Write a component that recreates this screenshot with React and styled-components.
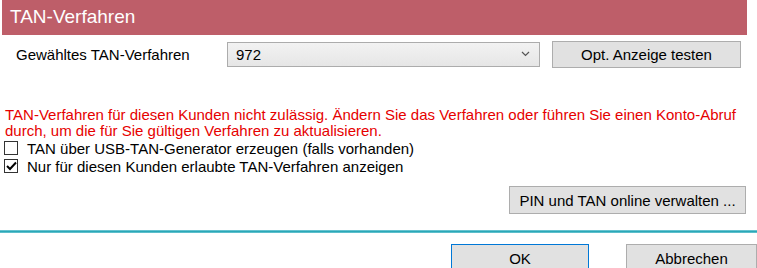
import React from "react";
import styled, { createGlobalStyle } from "styled-components";

const Global = createGlobalStyle`
  html, body { margin: 0; padding: 0; background: #ffffff; }
  body { font-family: "Liberation Sans", Arial, sans-serif; font-size: 15px; color: #000; }
  * { box-sizing: border-box; }
`;

const Page = styled.div`
  width: 757px;
  height: 268px;
  overflow: hidden;
  display: flex;
  flex-direction: column;
  & > * { flex-shrink: 0; }
`;

const Header = styled.div`
  margin-left: 2px;
  width: 745px;
  height: 35px;
  background: #be5e69;
  color: #fff;
  font-size: 19px;
  display: flex;
  align-items: center;
  padding-left: 8px;
  padding-bottom: 2px;
`;

const Row = styled.div`
  display: flex;
  align-items: center;
  margin-top: 6px;
  height: 26px;
`;

const Label = styled.div`
  width: 227px;
  padding-left: 16px;
`;

const Select = styled.div`
  width: 313px;
  height: 25px;
  border: 1px solid #acacac;
  background: linear-gradient(#f2f2f2, #e6e6e6);
  display: flex;
  align-items: center;
  justify-content: space-between;
  padding: 0 9px 0 8px;
`;

const Button = styled.div`
  width: ${(p) => p.$w}px;
  height: ${(p) => p.$h || 27}px;
  margin-left: ${(p) => p.$ml || 0}px;
  border: 1px solid ${(p) => (p.$focus ? "#0078d7" : "#adadad")};
  background: #e1e1e1;
  display: flex;
  align-items: center;
  justify-content: center;
  flex-shrink: 0;
`;

const Warning = styled.div`
  margin-top: 40px;
  padding-left: 5px;
  color: #e60000;
  line-height: 16px;
  white-space: nowrap;
`;

const CheckRow = styled.div`
  display: flex;
  align-items: center;
  height: 18px;
  padding-left: 4px;
`;

const Box = styled.div`
  width: 14px;
  height: 14px;
  border: 1px solid #333;
  background: #fff;
  margin-right: 9px;
  display: flex;
  align-items: center;
  justify-content: center;
`;

const RightRow = styled.div`
  display: flex;
  justify-content: flex-end;
  padding-right: 11px;
  margin-top: 11px;
`;

const Divider = styled.div`
  margin-top: 16px;
  height: 3px;
  background: linear-gradient(#8fd6e0, #2aa8b8 40%, #2aa8b8 70%, #9ad9e2);
`;

const Footer = styled.div`
  display: flex;
  margin-top: 11px;
  padding-left: 451px;
`;

export default function App() {
  return (
    <>
      <Global />
      <Page>
        <Header>TAN-Verfahren</Header>
        <Row>
          <Label>Gewähltes TAN-Verfahren</Label>
          <Select>
            <span>972</span>
            <svg width="9" height="6" viewBox="0 0 9 6">
              <path d="M1 1 L4.5 4.5 L8 1" fill="none" stroke="#555" strokeWidth="1.2" />
            </svg>
          </Select>
          <Button $w={189} $ml={12}>Opt. Anzeige testen</Button>
        </Row>
        <Warning>
          TAN-Verfahren für diesen Kunden nicht zulässig. Ändern Sie das Verfahren oder führen Sie einen Konto-Abruf
          <br />
          durch, um die für Sie gültigen Verfahren zu aktualisieren.
        </Warning>
        <CheckRow>
          <Box />
          TAN über USB-TAN-Generator erzeugen (falls vorhanden)
        </CheckRow>
        <CheckRow>
          <Box>
            <svg width="11" height="10" viewBox="0 0 11 10">
              <path d="M1 5 L4 8 L10 1.5" fill="none" stroke="#000" strokeWidth="2" />
            </svg>
          </Box>
          Nur für diesen Kunden erlaubte TAN-Verfahren anzeigen
        </CheckRow>
        <RightRow>
          <Button $w={237} $h={28}>PIN und TAN online verwalten ...</Button>
        </RightRow>
        <Divider />
        <Footer>
          <Button $w={138} $h={28} $focus>OK</Button>
          <Button $w={131} $h={28} $ml={37}>Abbrechen</Button>
        </Footer>
      </Page>
    </>
  );
}
